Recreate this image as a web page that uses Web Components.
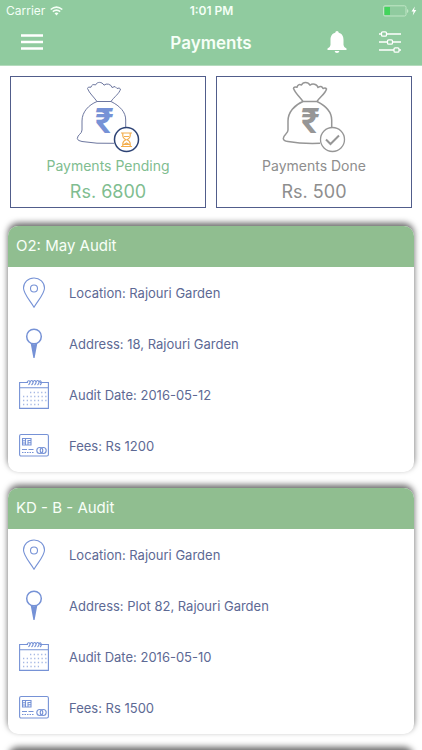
<!DOCTYPE html>
<html lang="en">
<head>
<meta charset="utf-8">
<meta name="viewport" content="width=device-width, initial-scale=1">
<title>Payments</title>
<style>
  html, body { height: 100%; }
  body { margin: 0; background: #fff; font-family: Inter, "Liberation Sans", sans-serif; }
</style>
</head>
<body>
<payments-app></payments-app>

<script>
const define = (name, html, setup) => {
  const template = document.createElement('template');
  template.innerHTML = html;
  customElements.define(name, class extends HTMLElement {
    constructor() {
      super();
      this.attachShadow({ mode: 'open' }).append(template.content.cloneNode(true));
    }
    connectedCallback() { if (setup) setup(this, this.shadowRoot); }
  });
};

define('status-bar', `
<style>
  :host { display: grid; grid-template-columns: 1fr auto 1fr; align-items: center; height: 22px; padding: 0 5px 0 6px; color: #f4fff6; font-size: 12px; line-height: 16px; }
  .left, .right { display: flex; align-items: center; gap: 5px; }
  .right { justify-content: flex-end; }
  .time { font-weight: 600; }
  svg { display: block; }
</style>
<div class="left"><span>Carrier</span>
  <svg width="13" height="10" viewBox="0 0 13 10" fill="none" stroke="currentColor" stroke-width="1.6" aria-hidden="true"><path d="M.7 3.5Q6.5-1.4 12.3 3.5M2.8 5.7Q6.5 2.6 10.2 5.7"/><path d="M4.5 7.2Q6.5 5.7 8.5 7.2L6.5 9.4Z" fill="currentColor" stroke="none"/></svg>
</div>
<span class="time">1:01 PM</span>
<div class="right">
  <svg width="34" height="12" viewBox="0 0 34 12" aria-label="Battery charging" role="img"><rect x=".5" y=".8" width="22.5" height="10.2" rx="1.5" fill="none" stroke="#c0e6c6"/><path d="M24 4v4q1.400-.5 1.400-2T24 4" fill="#c0e6c6"/><path d="M1.500 2H7v8H1.500Z" fill="#43d45c"/><path d="M31.800 1.500 28.500 6.600h2.100L29.700 10.500 33.300 5h-2.200Z" fill="#fff"/></svg>
</div>`);

define('nav-bar', `
<style>
  :host { display: grid; grid-template-columns: 1fr auto 1fr; align-items: center; box-sizing: border-box; height: 43px; padding: 0 20px 3px; color: #fff; }
  h1 { margin: 0; padding-top: 2px; font-size: 17px; line-height: 22px; font-weight: 600; color: #f6fff7; }
  button { display: block; padding: 0; border: 0; background: none; color: inherit; }
  svg { display: block; }
  .actions { display: flex; justify-content: flex-end; align-items: center; gap: 31px; }
</style>
<button type="button" aria-label="Menu"><svg width="24" height="18" viewBox="0 0 24 18" stroke="currentColor" stroke-width="2.500"><path d="M1 2.500h22M1 9h22M1 15.500h22"/></svg></button>
<h1>Payments</h1>
<div class="actions">
  <button type="button" aria-label="Notifications"><svg width="20" height="24" viewBox="0 0 20 24" fill="currentColor"><path d="M10 1Q11.600 1 11.800 2.800C15.300 3.800 16.500 6.500 16.500 10V15Q16.800 17.500 19.500 18.500V20H.5V18.500Q3.200 17.500 3.500 15V10C3.500 6.500 4.700 3.800 8.200 2.800Q8.400 1 10 1ZM7.600 21h4.800Q12 23 10 23T7.600 21Z"/></svg></button>
  <button type="button" aria-label="Filters"><svg width="24" height="24" viewBox="0 0 24 24" fill="none" stroke="currentColor" stroke-width="1.300"><path d="M1 4h2.500M8.500 4H23M1 12h8.500M14.500 12H23M1 20h15M21 20h2"/><rect x="3.500" y="1.800" width="5" height="4.400" rx="1.200"/><rect x="9.500" y="9.800" width="5" height="4.400" rx="1.200"/><rect x="16" y="17.800" width="5" height="4.400" rx="1.200"/></svg></button>
</div>`);

define('money-bag', `
<style>
  :host { display: block; --line: #6d779f; --sign: #7692d6; --ring: #2d4375; --weight: 1; --ring-weight: 1.500; }
  :host([kind="done"]) { --line: #969696; --sign: #969696; --ring: #969696; --weight: 1.500; --ring-weight: 1.300; }
  svg { display: block; }
  .bag { fill: none; stroke: var(--line); stroke-width: var(--weight); stroke-linejoin: round; }
  .ring { fill: #fff; stroke: var(--ring); stroke-width: var(--ring-weight); }
  text { fill: var(--sign); font: 700 34px Inter, "DejaVu Sans", sans-serif; }
  .glass { fill: none; stroke: #f3ae4d; stroke-width: 1.200; }
  .check { fill: none; stroke: #969696; stroke-width: 2; }
  :host([kind="done"]) .glass, :host(:not([kind="done"])) .check { display: none; }
</style>
<svg width="64" height="73" viewBox="76 80 64 73" aria-hidden="true">
  <path class="bag" d="M97 100.500C93.500 95.500 89.500 92.500 87.500 87.500Q87.500 85.500 91 86.200Q92 82.500 95.500 84C97 80.500 102 80.500 104 84.200Q106 82.500 108.500 83.200Q111.500 84 112 86.500Q115.500 84 117 87.500Q119.500 86.300 120.500 88C119.500 92.500 114 96 111 100.500ZM97 100.500C88.500 104 82 111 82 120V129C82 133 77.500 133.500 77.300 137.500Q77.300 139.800 82 140.500Q96 143 114 142.300M111 100.500C120 105 125.700 111 125.700 119V127"/>
  <text x="104.500" y="132" text-anchor="middle">₹</text>
  <circle class="ring" cx="126.500" cy="138.500" r="12"/>
  <path class="glass" d="M121 132h11M121 145.500h11M122.800 132.500v2.500q0 2 3 3.800q-3 1.500-3 4v2.500M130.200 132.500v2.500q0 2-3 3.800q3 1.500 3 4v2.500M124 135.500h5M124 143.500l2.500-1.500 2.500 1.500Z"/>
  <path class="check" d="M120 138.500 124.500 143 133 134.500"/>
</svg>`);

define('summary-tile', `
<style>
  :host { display: flex; flex-direction: column; align-items: center; flex: 1; border: 1px solid #515d8b; padding: 4px 0 3px; color: #80bd90; text-align: center; }
  :host([kind="done"]) { color: #8e8e8e; }
  .label { margin-top: 2px; font-size: 14px; line-height: 20px; }
  .amount { margin-top: 4px; font-size: 18px; line-height: 24px; }
</style>
<money-bag></money-bag>
<span class="label"><slot name="label"></slot></span>
<span class="amount"><slot></slot></span>`, (el, root) => {
  root.querySelector('money-bag').setAttribute('kind', el.getAttribute('kind'));
});

const glyphs = {
  pin: '<path d="M15 30.200C11.500 24 4.500 17 4.500 11A10.500 10 0 0 1 25.500 11C25.500 17 18.500 24 15 30.200Z"/><circle cx="15" cy="11.500" r="3.500"/>',
  place: '<circle cx="15" cy="8.500" r="7.300" stroke-width="1.500"/><path d="M11.700 15.500Q15 17 18.300 15.500L15.600 30H14.400Z" fill="currentColor" stroke="none"/>',
  date: '<path d="M9 3.500H.6V29.400H29.400V3.500H21M.6 8.800H29.400"/><path d="M8 3.500q1-2.500 2.500-1.500t-1 4M11 3.500q1-3 2.500-1.500t-1 4M14 3.500q1-3 2.500-1.500t-1 4M17 3.500q1-3 2.500-1.500t-1 4M20 3.500q1-3 2-1t-1 3.500"/><path d="M11 13.500H28M4 17.500H28M4 21.500H28M4 25.500H20" stroke-width="1.300" stroke-dasharray="1.300 2.400" opacity=".65"/>',
  fees: '<rect x=".6" y="4.500" width="28.800" height="21.500" rx="1.500"/><path d="M3.500 8.500h8.500v6.500H3.500ZM3.500 10.800h3M3.500 13h3M6.500 8.500v6.500M9 15v-4.500h3M9 12.700h3"/><circle cx="20.800" cy="20.500" r="3"/><circle cx="24.200" cy="20.500" r="3"/><path d="M3 19.500h5M9.500 19.500h5" /><path d="M3 22.500h12" stroke-dasharray="1.500 1"/>'
};

define('detail-row', `
<style>
  :host { display: flex; align-items: center; gap: 20px; height: 51px; padding: 0 11px; font-size: 13px; line-height: 20px; color: #5d6994; }
  svg { display: block; flex: none; color: #7692d6; }
</style>
<svg width="30" height="31" viewBox="0 0 30 31" fill="none" stroke="currentColor" stroke-width="1.100" aria-hidden="true"></svg>
<span><slot></slot></span>`, (el, root) => {
  root.querySelector('svg').innerHTML = glyphs[el.getAttribute('icon')];
});

define('audit-card', `
<style>
  :host { display: block; flex: none; padding-bottom: 1px; border-radius: 10px; background: #fff; box-shadow: 0 -3px 6px rgba(0, 0, 0, .6); }
  h2 { margin: 0; box-sizing: border-box; min-height: 41px; padding: 9px 8px 10px; border-radius: 10px 10px 0 0; background: #90be90; color: #f8fff8; font-size: 15px; line-height: 22px; font-weight: 400; }
</style>
<h2><slot name="title"></slot></h2>
<slot></slot>`);

define('payments-app', `
<style>
  :host { display: flex; flex-direction: column; height: 100vh; overflow: hidden; }
  header { flex: none; background: #90cb9f; border-bottom: 1px solid #b4dbbd; }
  .summary { display: flex; flex: none; gap: 10px; padding: 10px 10px 8px; }
  main { display: flex; flex-direction: column; flex: 1; min-height: 0; gap: 16px; padding: 10px 8px; overflow-y: auto; scrollbar-width: none; }
</style>
<header><status-bar></status-bar><nav-bar></nav-bar></header>
<section class="summary">
  <summary-tile kind="pending"><span slot="label">Payments Pending</span>Rs. 6800</summary-tile>
  <summary-tile kind="done"><span slot="label">Payments Done</span>Rs. 500</summary-tile>
</section>
<main>
  <audit-card><span slot="title">O2: May Audit</span>
    <detail-row icon="pin">Location: Rajouri Garden</detail-row>
    <detail-row icon="place">Address: 18, Rajouri Garden</detail-row>
    <detail-row icon="date">Audit Date: 2016-05-12</detail-row>
    <detail-row icon="fees">Fees: Rs 1200</detail-row>
  </audit-card>
  <audit-card><span slot="title">KD - B - Audit</span>
    <detail-row icon="pin">Location: Rajouri Garden</detail-row>
    <detail-row icon="place">Address: Plot 82, Rajouri Garden</detail-row>
    <detail-row icon="date">Audit Date: 2016-05-10</detail-row>
    <detail-row icon="fees">Fees: Rs 1500</detail-row>
  </audit-card>
  <audit-card></audit-card>
</main>`);
</script>
</body>
</html>
